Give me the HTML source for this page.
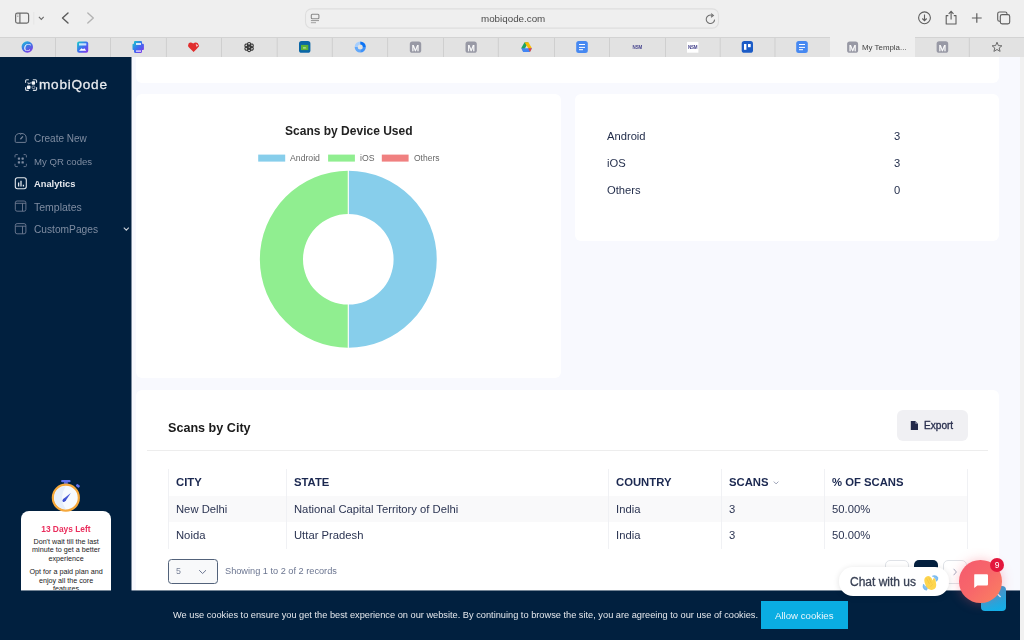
<!DOCTYPE html>
<html><head><meta charset="utf-8">
<style>
html,body{-webkit-font-smoothing:antialiased;margin:0;padding:0;width:1024px;height:640px;overflow:hidden;background:#f8f9fe;font-family:"Liberation Sans",sans-serif;}
.a{position:absolute;}
.t{position:absolute;white-space:nowrap;line-height:1;will-change:transform;}
svg{position:absolute;overflow:visible;will-change:transform;}
</style></head><body>
<!-- ===== Browser toolbar ===== -->
<div class="a" style="left:0;top:0;width:1024px;height:37px;background:#efefef;"></div>
<!-- tab bar -->
<div class="a" style="left:0;top:37px;width:1024px;height:20px;background:#e2e2e2;border-top:1px solid #d3d3d3;box-sizing:border-box;"></div>
<!-- toolbar icons -->
<svg style="left:0;top:0" width="1024" height="37">
 <g fill="none" stroke="#6b6b6b" stroke-width="1.2">
  <rect x="15.6" y="13.1" width="13" height="10" rx="1.8"/>
  <line x1="19.9" y1="13.1" x2="19.9" y2="23.1"/>
 </g>
 <g stroke="#8a8a8a" stroke-width="0.7"><line x1="17.2" y1="15" x2="18.4" y2="15"/><line x1="17.2" y1="16.5" x2="18.4" y2="16.5"/></g>
 <line x1="33.8" y1="12" x2="33.8" y2="24.5" stroke="#e2e2e2" stroke-width="0.8"/>
 <polyline points="38.9,16.8 41.3,19.4 43.7,16.8" fill="none" stroke="#6b6b6b" stroke-width="1.1"/>
 <polyline points="68,13 62.5,18 68,23" fill="none" stroke="#5a5a5a" stroke-width="1.4" stroke-linejoin="round" stroke-linecap="round"/>
 <polyline points="87.8,13 93.3,18 87.8,23" fill="none" stroke="#b3b3b3" stroke-width="1.4" stroke-linejoin="round" stroke-linecap="round"/>
 <rect x="305.5" y="8.9" width="413" height="19.2" rx="6" fill="#efefef" stroke="#dedede" stroke-width="1.1"/>
 <g fill="none" stroke="#8a8a8a" stroke-width="1.1"><rect x="311.3" y="14.3" width="7.6" height="4.4" rx="1"/></g>
 <line x1="310.9" y1="20.6" x2="319" y2="20.6" stroke="#8a8a8a" stroke-width="0.9"/>
 <line x1="310.9" y1="22.7" x2="316" y2="22.7" stroke="#9a9a9a" stroke-width="0.9"/>
 <g transform="translate(0.8 0.8)"><path d="M713.8,18.8 A4.2,4.2 0 1 1 711.2,14.6" fill="none" stroke="#6e6e6e" stroke-width="1.05"/>
 <path d="M710.3,12.8 L712.6,14.7 L710.2,16.4" fill="none" stroke="#6e6e6e" stroke-width="1.05"/></g>
 <circle cx="924.5" cy="17.8" r="5.9" fill="none" stroke="#5e5e5e" stroke-width="1.1"/>
 <path d="M924.5,14.6 V20.6 M922.3,18.5 L924.5,20.7 L926.7,18.5" fill="none" stroke="#5e5e5e" stroke-width="1.1"/>
 <path d="M948.3,15.6 H946.2 V24 H956 V15.6 H953.8" fill="none" stroke="#5e5e5e" stroke-width="1.1" stroke-linejoin="round"/>
 <path d="M951.1,11.6 V19.5 M948.7,13.8 L951.1,11.4 L953.5,13.8" fill="none" stroke="#5e5e5e" stroke-width="1.1"/>
 <path d="M976.8,13.2 V22.8 M971.9,18 H981.7" stroke="#5e5e5e" stroke-width="1.2"/>
 <rect x="997.7" y="12" width="9.3" height="9.3" rx="1.8" fill="none" stroke="#5e5e5e" stroke-width="1.1"/>
 <rect x="1000.3" y="14.6" width="9.4" height="9.3" rx="1.8" fill="#efefef" stroke="#5e5e5e" stroke-width="1.1"/>
</svg>
<div class="t" style="left:481px;top:14.1px;font-size:9.8px;color:#4c4c4c;">mobiqode.com</div>
<div class="a" style="left:830px;top:37px;width:85px;height:20px;background:#efefef;"></div>
<svg style="left:0;top:37px" width="1024" height="20">
 <defs>
  <linearGradient id="gC" x1="0" y1="0" x2="0.6" y2="1"><stop offset="0" stop-color="#1fc8d6"/><stop offset="0.5" stop-color="#3a7be6"/><stop offset="1" stop-color="#7b3fe4"/></linearGradient>
  <linearGradient id="gP" x1="0" y1="0" x2="1" y2="1"><stop offset="0" stop-color="#14d0c8"/><stop offset="0.5" stop-color="#3c6ef0"/><stop offset="1" stop-color="#8a2fe6"/></linearGradient>
 </defs>
 <g stroke="#cfcfcf" stroke-width="1">
  <line x1="55.5" y1="1" x2="55.5" y2="20"/><line x1="110.5" y1="1" x2="110.5" y2="20"/><line x1="166.4" y1="1" x2="166.4" y2="20"/>
  <line x1="221.5" y1="1" x2="221.5" y2="20"/><line x1="277.2" y1="1" x2="277.2" y2="20"/><line x1="332.3" y1="1" x2="332.3" y2="20"/>
  <line x1="387.6" y1="1" x2="387.6" y2="20"/><line x1="443.5" y1="1" x2="443.5" y2="20"/><line x1="498.3" y1="1" x2="498.3" y2="20"/>
  <line x1="554.5" y1="1" x2="554.5" y2="20"/><line x1="609.5" y1="1" x2="609.5" y2="20"/><line x1="665.5" y1="1" x2="665.5" y2="20"/>
  <line x1="720.2" y1="1" x2="720.2" y2="20"/><line x1="775" y1="1" x2="775" y2="20"/><line x1="969.3" y1="1" x2="969.3" y2="20"/>
 </g>
 <!-- 1 canva -->
 <circle cx="27.3" cy="10" r="5.7" fill="url(#gC)"/>
 <text x="27" y="13.6" font-family="Liberation Serif" font-style="italic" font-size="10" fill="#fff" text-anchor="middle">C</text>
 <!-- 2 gallery -->
 <rect x="77.1" y="4.5" width="11.1" height="11.3" rx="2" fill="url(#gP)"/>
 <rect x="79" y="6.3" width="7.3" height="2.2" fill="#d8f0ff" opacity="0.9"/>
 <path d="M79,13.8 L81.5,11.2 L83,12.3 L84.3,11.3 L86.3,13.8 Z" fill="#fff"/>
 <!-- 3 printer -->
 <path d="M135,4.1 H141 Q142,4.1 142,5.2 V6.8 H143 Q143.9,6.8 143.9,7.8 V12.2 Q143.9,13 143,13 H142 V14.8 Q142,15.9 141,15.9 H135 Q134,15.9 134,14.8 V13 H133.4 Q132.5,13 132.5,12.2 V7.8 Q132.5,6.8 133.4,6.8 H134 V5.2 Q134,4.1 135,4.1Z" fill="url(#gP)"/>
 <rect x="136" y="6.2" width="5" height="1.6" fill="#fff"/>
 <rect x="136" y="13.4" width="5" height="1.4" fill="#e6d8ff"/>
 <!-- 4 heart -->
 <path d="M193.6,14.9 L189,10.5 Q187.4,8.7 188.6,6.6 Q190.4,4.4 193.2,6.6 Q195.6,4.4 197.8,6.2 L199.2,8.9 Q197.5,11.2 193.6,14.9Z" fill="#e12d2d"/>
 <path d="M195.7,6.8 L198.4,8.8 L196.3,9.8Z" fill="#f5c8c8"/>
 <!-- 5 openai -->
 <g fill="none" stroke="#3a3a3a" stroke-width="1.1">
  <g transform="translate(249.1 10.1)">
   <rect x="-1.6" y="-4.6" width="3.2" height="6" rx="1.6" transform="rotate(0)"/>
   <rect x="-1.6" y="-4.6" width="3.2" height="6" rx="1.6" transform="rotate(60)"/>
   <rect x="-1.6" y="-4.6" width="3.2" height="6" rx="1.6" transform="rotate(120)"/>
   <rect x="-1.6" y="-4.6" width="3.2" height="6" rx="1.6" transform="rotate(180)"/>
   <rect x="-1.6" y="-4.6" width="3.2" height="6" rx="1.6" transform="rotate(240)"/>
   <rect x="-1.6" y="-4.6" width="3.2" height="6" rx="1.6" transform="rotate(300)"/>
  </g>
 </g>
 <!-- 6 green -->
 <rect x="299" y="4.1" width="11.4" height="11.7" rx="2.6" fill="#0a66a6"/>
 <rect x="301" y="7.9" width="7.3" height="5.2" fill="#5cb234"/>
 <text x="304.6" y="12" font-size="4" fill="#d5f0c0" text-anchor="middle">m</text>
 <!-- 7 ring -->
 <g fill="none" stroke-width="3.1" transform="translate(360.25 10)">
  <path d="M-4.05,0 A4.05,4.05 0 0 1 0,-4.05" stroke="#a6cefd"/>
  <path d="M0,4.05 A4.05,4.05 0 0 1 -4.05,0" stroke="#62a8fa"/>
  <path d="M4.05,0 A4.05,4.05 0 0 1 0,4.05" stroke="#3f92f8"/>
  <path d="M0,-4.05 A4.05,4.05 0 0 1 4.05,0" stroke="#0b73f4"/>
 </g>
 <!-- 8,9 M -->
 <rect x="409.8" y="4.5" width="11.4" height="11.3" rx="2.6" fill="#9899a5"/>
 <text x="415.5" y="13.6" font-size="8.8" fill="#fff" text-anchor="middle" stroke="#fff" stroke-width="0.25">M</text>
 <rect x="465.5" y="4.5" width="11.3" height="11.3" rx="2.6" fill="#9899a5"/>
 <text x="471.15" y="13.6" font-size="8.8" fill="#fff" text-anchor="middle" stroke="#fff" stroke-width="0.25">M</text>
 <!-- 10 drive -->
 <path d="M524.6,5.3 L528.4,5.3 L525.2,11 L523.3,14.2 L521.3,11 Z" fill="#1ea362"/>
 <path d="M524.6,5.3 L528.4,5.3 L531.9,11.3 L528.2,11.3 Z" fill="#fbbc04"/>
 <path d="M523.3,11.3 L531.9,11.3 L529.9,15 L523.1,15 L521.3,11.3Z" fill="#4285f4"/>
 <path d="M528.2,11.3 L531.9,11.3 L530,15 Z" fill="#ea4335"/>
 <!-- 11 docs -->
 <rect x="576.2" y="4.1" width="11.6" height="11.9" rx="2.5" fill="#4688f1"/>
 <g stroke="#fff" stroke-width="1"><line x1="579" y1="7.5" x2="585" y2="7.5"/><line x1="579" y1="10.4" x2="585" y2="10.4"/><line x1="579" y1="12.7" x2="583" y2="12.7"/></g>
 <!-- 12 nsm -->
 <text x="637.3" y="11.8" font-size="4.5" font-weight="bold" fill="#4b4990" text-anchor="middle" letter-spacing="-0.2">NSM</text>
 <!-- 13 nsm white -->
 <rect x="687" y="4.9" width="11.4" height="10.8" fill="#ffffff"/>
 <text x="692.7" y="11.8" font-size="4.5" font-weight="bold" fill="#4b4990" text-anchor="middle" letter-spacing="-0.2">NSM</text>
 <!-- 14 trello -->
 <rect x="741.7" y="4.1" width="11.3" height="11.7" rx="2.6" fill="#1b5bc6"/>
 <rect x="744" y="7" width="2.4" height="5.8" fill="#fff"/>
 <rect x="748" y="7" width="2.7" height="3.2" fill="#fff"/>
 <!-- 15 docs -->
 <rect x="796.2" y="4.1" width="11.6" height="11.9" rx="2.5" fill="#4688f1"/>
 <g stroke="#fff" stroke-width="1"><line x1="799" y1="7.5" x2="805" y2="7.5"/><line x1="799" y1="10.4" x2="805" y2="10.4"/><line x1="799" y1="12.7" x2="803" y2="12.7"/></g>
 <!-- active M -->
 <rect x="847.1" y="4.4" width="11" height="11.4" rx="2.6" fill="#9899a5"/>
 <text x="852.6" y="13.5" font-size="8.8" fill="#fff" text-anchor="middle" stroke="#fff" stroke-width="0.25">M</text>
 <!-- 17 M -->
 <rect x="936.6" y="4.2" width="11.6" height="11.6" rx="2.6" fill="#9899a5"/>
 <text x="942.4" y="13.5" font-size="8.8" fill="#fff" text-anchor="middle" stroke="#fff" stroke-width="0.25">M</text>
 <!-- star -->
 <path d="M997,5.2 L998.4,8.6 L1001.9,8.8 L999.2,11 L1000.1,14.4 L997,12.5 L993.9,14.4 L994.8,11 L992.1,8.8 L995.6,8.6 Z" fill="none" stroke="#6a6a6a" stroke-width="1" stroke-linejoin="round"/>
</svg>
<div class="t" style="left:862.1px;top:43.6px;font-size:7.9px;color:#444;">My Templa...</div>

<!-- ===== Sidebar ===== -->
<div class="a" style="left:0;top:57px;width:131px;height:583px;background:#01203f;"></div>
<div class="a" style="left:131px;top:57px;width:1px;height:583px;background:#7d8c9e;"></div>
<!-- logo -->
<svg style="left:0;top:0" width="131" height="100">
 <g fill="none" stroke="#d5dbe4" stroke-width="1.15" stroke-linecap="round">
  <path d="M25.6,82.3 V80.8 Q25.6,79.7 26.7,79.7 H28.4"/>
  <path d="M33.3,79.7 H35.5 Q36.6,79.7 36.6,80.8 V82.3"/>
  <path d="M25.6,87.5 V89.2 Q25.6,90.3 26.7,90.3 H28.4"/>
  <path d="M33.3,90.3 H35.5 Q36.6,90.3 36.6,89.2 V87.5"/>
 </g>
 <g fill="#f4f6f9">
  <rect x="31.7" y="81.2" width="3.4" height="3.5" rx="0.9"/>
  <rect x="26.9" y="85.6" width="3.6" height="3.4" rx="0.9"/>
 </g>
 <path d="M27.6,82.4 L28.6,83.8 L31.6,82.6" fill="none" stroke="#aab4c3" stroke-width="1.1"/>
 <rect x="32.1" y="86" width="2.7" height="2.6" rx="0.8" fill="none" stroke="#9aa5b6" stroke-width="0.9"/>
</svg>
<div class="t" style="left:39px;top:77.6px;font-size:13.6px;color:#e8ebef;letter-spacing:0.75px;-webkit-text-stroke:0.3px #e8ebef;">mobiQode</div>
<!-- menu -->
<svg style="left:0;top:125px" width="131" height="120" fill="none" stroke="#6f7c93" stroke-width="0.9">
 <!-- create new: gauge -->
 <path d="M15.2,16.4 V12.9 Q15.2,8.4 20.7,8.4 Q26.2,8.4 26.2,12.9 V16.4 Q26.2,17.4 25.2,17.4 H16.2 Q15.2,17.4 15.2,16.4Z" stroke="#7a879c"/>
 <path d="M20.4,14.2 L22.9,11.4" stroke-width="1.3" stroke="#7a879c"/>
 <path d="M20.7,8.8 v1.2" stroke-width="0.8"/>
 <!-- my qr: scan -->
 <path d="M15,32.4 V30.6 Q15,29.6 16,29.6 H17.8 M23.6,29.6 H25.4 Q26.4,29.6 26.4,30.6 V32.4 M26.4,38.8 V40.6 Q26.4,41.6 25.4,41.6 H23.6 M17.8,41.6 H16 Q15,41.6 15,40.6 V38.8"/>
 <g fill="#7d8aa0" stroke="none"><rect x="17.8" y="32.4" width="2.3" height="2.3" rx="0.6"/><rect x="21.5" y="32.4" width="2.3" height="2.3" rx="0.6"/><rect x="17.8" y="36.2" width="2.3" height="2.3" rx="0.6"/><rect x="21.5" y="36.2" width="2.3" height="2.3" rx="0.6"/></g>
 <!-- analytics -->
 <rect x="15.3" y="52.7" width="11" height="11" rx="2.2" stroke="#e3e7ec" stroke-width="1.1"/>
 <path d="M18.6,57.4 V61.4 M21,55.8 V61.4 M23.4,59.8 V61.4" stroke="#e3e7ec" stroke-width="1.3"/>
 <!-- templates -->
 <rect x="15.3" y="76" width="10.6" height="10.2" rx="1.8"/>
 <path d="M15.3,78.3 H25.9 M22.5,78.3 V86.2"/>
 <!-- custom pages -->
 <rect x="15.3" y="98.6" width="10.6" height="10.2" rx="1.8"/>
 <path d="M15.3,101.2 H25.9 M22.5,101.2 V108.8"/>
 <polyline points="123.8,102.6 126.3,105.1 128.8,102.6" stroke="#c9cfd8" stroke-width="1.1"/>
</svg>
<div class="t" style="left:33.8px;top:134.3px;font-size:10px;color:#7f8ca1;">Create New</div>
<div class="t" style="left:33.8px;top:156.8px;font-size:9.6px;color:#7f8ca1;">My QR codes</div>
<div class="t" style="left:33.8px;top:179.7px;font-size:9.3px;font-weight:bold;color:#e6e9ee;">Analytics</div>
<div class="t" style="left:33.8px;top:202px;font-size:10.5px;color:#7f8ca1;">Templates</div>
<div class="t" style="left:33.8px;top:225px;font-size:10.2px;color:#7f8ca1;">CustomPages</div>
<!-- trial card -->
<div class="a" style="left:21.2px;top:510.6px;width:89.8px;height:90px;background:#fff;border-radius:8px 8px 0 0;"></div>
<svg style="left:0;top:470px" width="131" height="50">
 <rect x="61.1" y="9.9" width="9.5" height="2.4" rx="1.1" fill="#6272ee"/>
 <rect x="64" y="12" width="3.8" height="2" fill="#5566dd"/>
 <rect x="76" y="14.6" width="3.8" height="2.6" rx="0.8" fill="#6272ee" transform="rotate(40 77.9 15.9)"/>
 <circle cx="65.85" cy="27.7" r="13" fill="#f7faff" stroke="#f5a83c" stroke-width="2.2"/>
 <path d="M65.85,16.2 A11.5,11.5 0 0 0 65.85,39.2 Q58,27.7 65.85,16.2Z" fill="#e6eefb"/>
 <path d="M63.3,28.9 L70.8,23.1 L65.5,31.1 Z" fill="#4556d6"/>
 <ellipse cx="64.2" cy="30.2" rx="1.9" ry="1.5" transform="rotate(-40 64.2 30.2)" fill="#3f50cf"/>
</svg>
<div class="t" style="left:21.2px;width:89.8px;text-align:center;top:525px;font-size:8.4px;font-weight:bold;color:#ea2d5c;">13 Days Left</div>
<div class="a" style="left:21.2px;width:89.8px;top:537.8px;height:52.6px;overflow:hidden;text-align:center;font-size:7.2px;line-height:8.5px;color:#1a1a1a;">Don't wait till the last<br>minute to get a better<br>experience<div style="height:5px"></div>Opt for a paid plan and<br>enjoy all the core<br>features</div>

<!-- ===== Content ===== -->
<div class="a" style="left:1020px;top:57px;width:4px;height:583px;background:#f1f1f1;"></div>
<div class="a" style="left:136px;top:57px;width:863px;height:25.6px;background:#fff;border-radius:0 0 6px 6px;"></div>
<div class="a" style="left:136px;top:94px;width:425px;height:284.3px;background:#fff;border-radius:6px;"></div>
<div class="a" style="left:575px;top:94px;width:424px;height:147.4px;background:#fff;border-radius:6px;"></div>
<!-- chart -->
<div class="t" style="left:284.8px;top:124.7px;font-size:12.03px;font-weight:bold;color:#222;">Scans by Device Used</div>
<svg style="left:0;top:0" width="1024" height="640">
 <rect x="258.2" y="154.6" width="27" height="7" fill="#87ceeb"/>
 <rect x="328.1" y="154.6" width="26.8" height="7" fill="#90ee90"/>
 <rect x="381.8" y="154.6" width="26.8" height="7" fill="#f08080"/>
 <path d="M348.3,170.8 A88.5,88.5 0 0 1 348.3,347.8 L348.3,304.6 A45.3,45.3 0 0 0 348.3,214 Z" fill="#87ceeb"/>
 <path d="M348.3,347.8 A88.5,88.5 0 0 1 348.3,170.8 L348.3,214 A45.3,45.3 0 0 0 348.3,304.6 Z" fill="#90ee90"/>
 <line x1="348.3" y1="170" x2="348.3" y2="215" stroke="#fff" stroke-width="1.1"/>
 <line x1="348.3" y1="304" x2="348.3" y2="349" stroke="#fff" stroke-width="1.1"/>
</svg>
<div class="t" style="left:290px;top:153.7px;font-size:8.7px;color:#666;">Android</div>
<div class="t" style="left:360px;top:153.7px;font-size:8.7px;color:#666;">iOS</div>
<div class="t" style="left:413.7px;top:153.7px;font-size:8.5px;color:#666;">Others</div>
<!-- counts -->
<div class="t" style="left:606.5px;top:130.9px;font-size:11.2px;color:#1f2a48;">Android</div>
<div class="t" style="left:606.5px;top:157.5px;font-size:11.2px;color:#1f2a48;">iOS</div>
<div class="t" style="left:606.5px;top:184.5px;font-size:11.2px;color:#1f2a48;">Others</div>
<div class="t" style="left:893.6px;top:130.9px;font-size:11.2px;color:#1f2a48;">3</div>
<div class="t" style="left:893.6px;top:157.5px;font-size:11.2px;color:#1f2a48;">3</div>
<div class="t" style="left:893.6px;top:184.5px;font-size:11.2px;color:#1f2a48;">0</div>
<div class="a" style="left:136px;top:390px;width:863px;height:260px;background:#fff;border-radius:6px;"></div>
<!-- table card -->
<div class="t" style="left:168.1px;top:421.5px;font-size:12.6px;font-weight:bold;color:#1a1a1a;">Scans by City</div>
<div class="a" style="left:896.6px;top:410.1px;width:71.3px;height:30.5px;background:#f0f0f3;border-radius:6px;"></div>
<svg style="left:0;top:0" width="1024" height="640">
 <path d="M910.8,421 H915.3 L918,423.7 V430 H910.8 Z" fill="#22294a"/>
 <path d="M915.3,421 V423.7 H918" fill="#8a8fa5"/>
</svg>
<div class="t" style="left:923.6px;top:420.9px;font-size:10.1px;color:#2b3150;-webkit-text-stroke:0.35px #2b3150;">Export</div>
<div class="a" style="left:147px;top:450px;width:841.3px;height:1px;background:#ededed;"></div>
<!-- table -->
<div class="a" style="left:168.6px;top:495.5px;width:798.6px;height:26.5px;background:#f9f9fa;"></div>
<div class="a" style="left:168.1px;top:468.7px;width:1px;height:80px;background:#f0f1f4;"></div>
<div class="a" style="left:285.8px;top:468.7px;width:1px;height:80px;background:#f0f1f4;"></div>
<div class="a" style="left:608.3px;top:468.7px;width:1px;height:80px;background:#f0f1f4;"></div>
<div class="a" style="left:720.8px;top:468.7px;width:1px;height:80px;background:#f0f1f4;"></div>
<div class="a" style="left:824.2px;top:468.7px;width:1px;height:80px;background:#f0f1f4;"></div>
<div class="a" style="left:966.7px;top:468.7px;width:1px;height:80px;background:#f0f1f4;"></div>
<div class="t" style="left:176.2px;top:476.7px;font-size:11.3px;font-weight:bold;color:#1b2850;">CITY</div>
<div class="t" style="left:294px;top:476.7px;font-size:11.3px;font-weight:bold;color:#1b2850;">STATE</div>
<div class="t" style="left:615.8px;top:476.7px;font-size:11.3px;font-weight:bold;color:#1b2850;">COUNTRY</div>
<div class="t" style="left:728.9px;top:476.7px;font-size:11.3px;font-weight:bold;color:#1b2850;">SCANS</div>
<div class="t" style="left:832.4px;top:476.7px;font-size:11.3px;font-weight:bold;color:#1b2850;">% OF SCANS</div>
<svg style="left:0;top:0" width="1024" height="640"><polyline points="773.8,481.6 776.1,483.9 778.4,481.6" fill="none" stroke="#8e96ad" stroke-width="0.9"/></svg>
<div class="t" style="left:176px;top:503.6px;font-size:11.25px;color:#2b3452;">New Delhi</div>
<div class="t" style="left:294px;top:503.6px;font-size:11.25px;color:#2b3452;">National Capital Territory of Delhi</div>
<div class="t" style="left:615.8px;top:503.6px;font-size:11.25px;color:#2b3452;">India</div>
<div class="t" style="left:728.8px;top:503.6px;font-size:11.25px;color:#2b3452;">3</div>
<div class="t" style="left:832.4px;top:503.6px;font-size:11.25px;color:#2b3452;">50.00%</div>
<div class="t" style="left:176px;top:529.7px;font-size:11.25px;color:#2b3452;">Noida</div>
<div class="t" style="left:294px;top:529.7px;font-size:11.25px;color:#2b3452;">Uttar Pradesh</div>
<div class="t" style="left:615.8px;top:529.7px;font-size:11.25px;color:#2b3452;">India</div>
<div class="t" style="left:728.8px;top:529.7px;font-size:11.25px;color:#2b3452;">3</div>
<div class="t" style="left:832.4px;top:529.7px;font-size:11.25px;color:#2b3452;">50.00%</div>
<!-- footer of table -->
<div class="a" style="left:168.2px;top:559.2px;width:50.2px;height:24.8px;box-sizing:border-box;border:1.4px solid #52627a;border-radius:3.5px;background:#f8f9fa;"></div>
<div class="t" style="left:176px;top:567px;font-size:8.9px;color:#7a8399;">5</div>
<svg style="left:0;top:0" width="1024" height="640"><polyline points="199.2,570.2 202.6,573.5 206,570.2" fill="none" stroke="#6a7590" stroke-width="1"/></svg>
<div class="t" style="left:225.3px;top:567.2px;font-size:9.2px;color:#6b7590;">Showing 1 to 2 of 2 records</div>
<!-- pagination -->
<div class="a" style="left:884.6px;top:559.6px;width:24.2px;height:24px;box-sizing:border-box;border:1px solid #dfe2e7;border-radius:5px;background:#fff;"></div>
<div class="a" style="left:913.6px;top:559.6px;width:24.8px;height:24px;border-radius:5px;background:#04203f;"></div>
<div class="a" style="left:943.2px;top:559.6px;width:23.8px;height:24px;box-sizing:border-box;border:1px solid #dfe2e7;border-radius:5px;background:#fff;"></div>
<svg style="left:0;top:0" width="1024" height="640"><polyline points="953.6,568.8 956.4,572 953.6,575.2" fill="none" stroke="#a5acc0" stroke-width="1"/></svg>

<!-- ===== Cookie bar ===== -->
<div class="a" style="left:0;top:590px;width:1020px;height:1px;background:rgba(1,32,63,0.55);"></div>
<div class="a" style="left:0;top:591px;width:1020px;height:49px;background:#01203f;"></div>
<div class="t" style="left:172.6px;top:611px;font-size:9.24px;color:#e4e7ec;">We use cookies to ensure you get the best experience on our website. By continuing to browse the site, you are agreeing to our use of cookies.</div>
<div class="a" style="left:761px;top:601.3px;width:87px;height:27.5px;background:#0aade2;"></div>
<div class="t" style="left:775px;top:610.8px;font-size:9.67px;color:#eaf6fb;">Allow cookies</div>
<!-- scroll top button -->
<div class="a" style="left:980.6px;top:586px;width:25.4px;height:25.3px;border-radius:4px;background:linear-gradient(180deg,#3699d2 0%,#22a6df 60%,#14b0e8 100%);"></div>
<svg style="left:0;top:0" width="1024" height="640"><polyline points="986,597 993.3,590 1000.6,597" fill="none" stroke="#dff2fb" stroke-width="1.3"/></svg>
<!-- chat -->
<div class="a" style="left:838.5px;top:566.7px;width:110.8px;height:29.3px;border-radius:14px;background:#fff;box-shadow:0 1px 6px rgba(0,0,0,0.12);"></div>
<div class="t" style="left:849.9px;top:575.8px;font-size:12px;color:#394155;-webkit-text-stroke:0.3px #394155;">Chat with us</div>
<svg style="left:0;top:0" width="1024" height="640">
 <path d="M933,576.2 Q936,575.2 937.6,577.8 Q937.8,580 936.2,580.8 M923.6,584.6 Q922.6,588.6 926.4,589.8 Q927.6,588.4 926.8,586.8" fill="#8cc4f2" stroke="#7bbbf0" stroke-width="1.4" stroke-linecap="round"/>
 <path d="M924.6,582.4 Q923.4,578 926.6,576.4 Q929.4,575.2 931.6,578.2 L932.6,580.6 L933.2,578.6 Q934.6,577.6 935.4,579.4 L936.2,584.2 Q936.6,588.8 932.6,589.8 Q928.6,590.6 926.2,586.8 Z" fill="#fdd54f"/>
 <path d="M926.6,578.4 L929.4,584 M928.8,577.6 L931.4,583.4 M932.6,584.2 Q932,586 930.2,586.4" fill="none" stroke="#f0bf3c" stroke-width="0.6"/>
</svg>
<div class="a" style="left:959.4px;top:560.4px;width:42.6px;height:42.3px;border-radius:50%;background:linear-gradient(135deg,#f55a6e 0%,#f7676a 50%,#fa8360 100%);box-shadow:0 0 12px rgba(245,90,110,0.35);"></div>
<svg style="left:0;top:0" width="1024" height="640">
 <path d="M974.6,574.3 H986.8 Q988,574.3 988,575.5 V584.2 Q988,585.4 986.8,585.4 H977.4 L974.2,588 V575.5 Q974.2,574.3 974.6,574.3Z" fill="#fff"/>
</svg>
<div class="a" style="left:990px;top:558px;width:14px;height:14px;border-radius:50%;background:#e3173d;"></div>
<div class="t" style="left:990px;width:14px;text-align:center;top:561px;font-size:8.5px;color:#fff;">9</div>
</body></html>
